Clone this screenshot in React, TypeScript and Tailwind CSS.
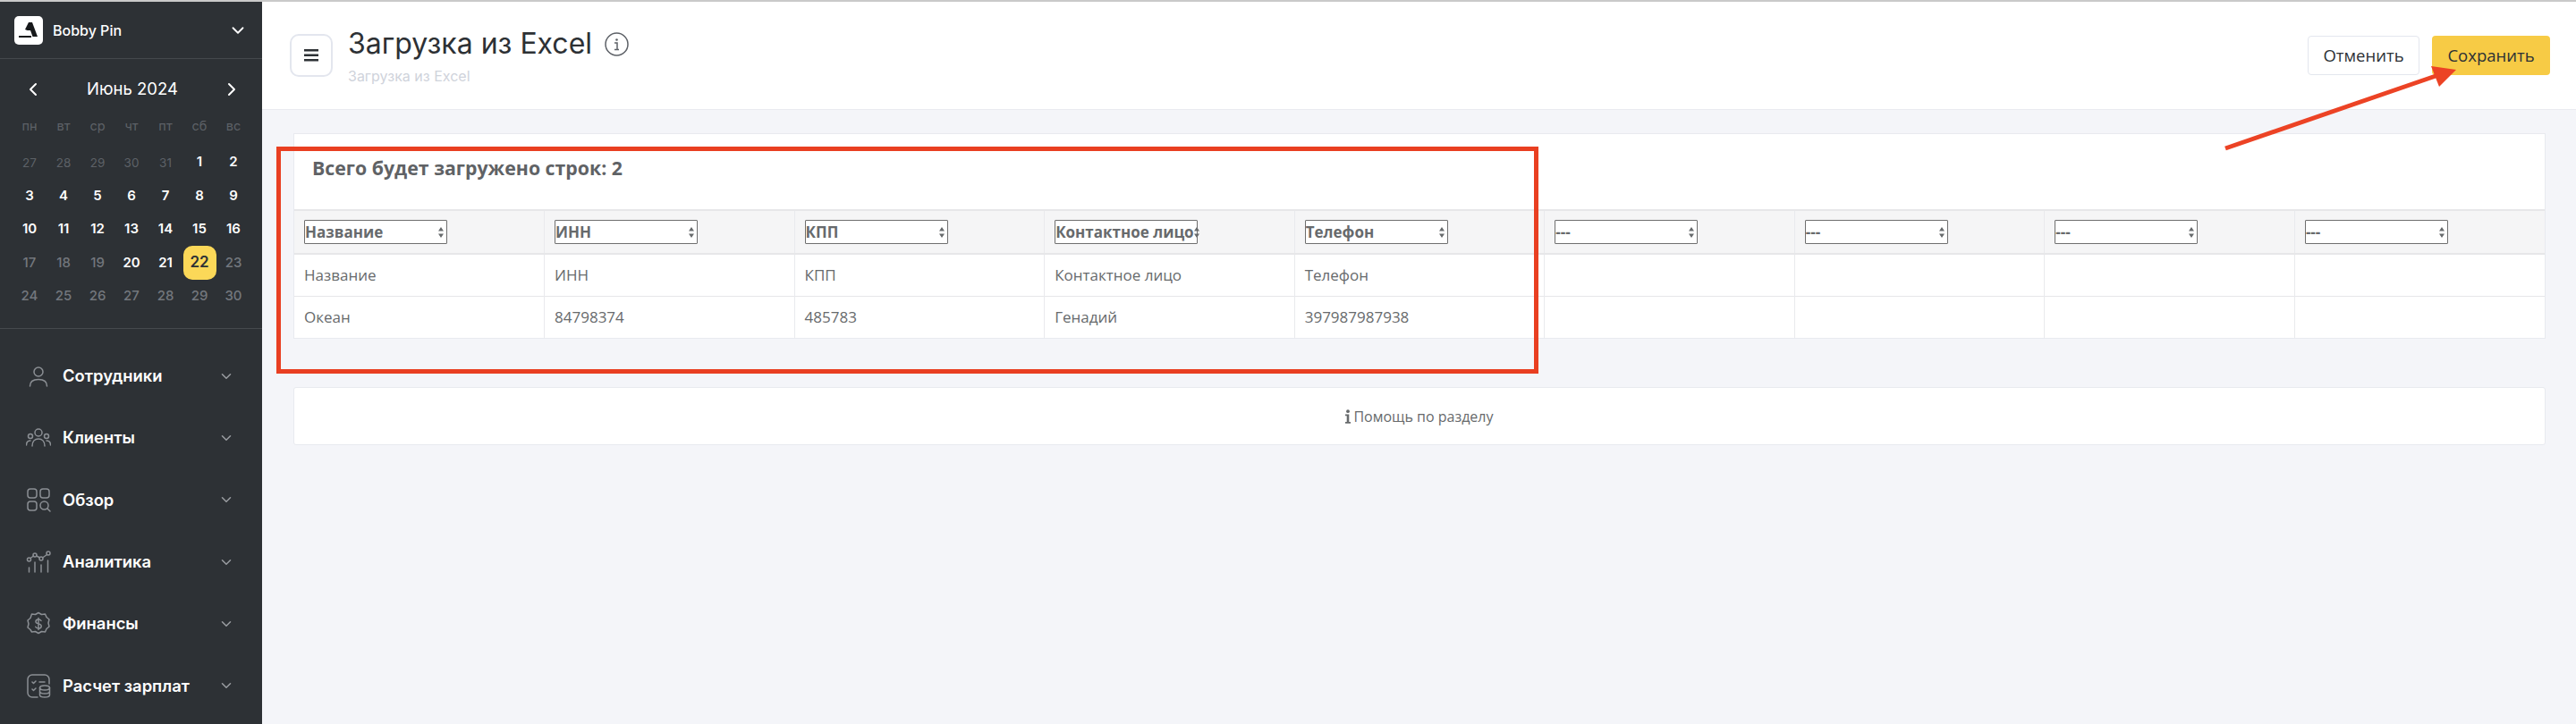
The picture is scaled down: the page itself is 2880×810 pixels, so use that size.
import { ChevronDown, ChevronLeft, ChevronRight } from 'lucide-react';
import type { ReactNode } from 'react';

const WEEK_DAYS = ['пн', 'вт', 'ср', 'чт', 'пт', 'сб', 'вс'];

// tone: m = other month, b = bright, d = dimmed, s = selected
const DAYS: [number, string][] = [
  [27, 'm'], [28, 'm'], [29, 'm'], [30, 'm'], [31, 'm'], [1, 'b'], [2, 'b'],
  [3, 'b'], [4, 'b'], [5, 'b'], [6, 'b'], [7, 'b'], [8, 'b'], [9, 'b'],
  [10, 'b'], [11, 'b'], [12, 'b'], [13, 'b'], [14, 'b'], [15, 'b'], [16, 'b'],
  [17, 'd'], [18, 'd'], [19, 'd'], [20, 'b'], [21, 'b'], [22, 's'], [23, 'd'],
  [24, 'd'], [25, 'd'], [26, 'd'], [27, 'd'], [28, 'd'], [29, 'd'], [30, 'd'],
];

const COLUMNS = ['Название', 'ИНН', 'КПП', 'Контактное лицо', 'Телефон', '---', '---', '---', '---'];
const ROWS = [
  ['Название', 'ИНН', 'КПП', 'Контактное лицо', 'Телефон', '', '', '', ''],
  ['Океан', '84798374', '485783', 'Генадий', '397987987938', '', '', '', ''],
];

function Icon({ children }: { children: ReactNode }) {
  return (
    <svg viewBox="0 0 28 28" fill="none" stroke="#8b8f94" strokeWidth="1.5" strokeLinecap="round" strokeLinejoin="round" className="w-[28px] h-[28px] shrink-0">
      {children}
    </svg>
  );
}

const MENU: { label: string; icon: ReactNode }[] = [
  {
    label: 'Сотрудники',
    icon: (
      <Icon>
        <circle cx="14" cy="9" r="5" />
        <path d="M4.500 25c0-5 4-7.500 9.500-7.500s9.500 2.500 9.500 7.500" />
      </Icon>
    ),
  },
  {
    label: 'Клиенты',
    icon: (
      <Icon>
        <circle cx="14" cy="8" r="4" />
        <circle cx="5" cy="12" r="2.500" />
        <circle cx="23" cy="12" r="2.500" />
        <path d="M7 23c0-5 3-8 7-8s7 3 7 8" />
        <path d="M0.500 22c0-3 1.500-5 4.500-5" />
        <path d="M27.500 22c0-3-1.500-5-4.500-5" />
      </Icon>
    ),
  },
  {
    label: 'Обзор',
    icon: (
      <Icon>
        <rect x="2" y="2" width="10" height="10" rx="3" />
        <rect x="16" y="2" width="10" height="10" rx="3" />
        <rect x="2" y="16" width="10" height="10" rx="3" />
        <circle cx="20.500" cy="20.500" r="4.500" />
        <path d="M24 24l3 3" />
      </Icon>
    ),
  },
  {
    label: 'Аналитика',
    icon: (
      <Icon>
        <circle cx="3.500" cy="11" r="2" />
        <circle cx="10" cy="6" r="2" />
        <circle cx="17" cy="10" r="2" />
        <circle cx="25" cy="4" r="2" />
        <path d="M5 9.500l3.500-2.500M12 7l3.500 2M18.500 9l5-3.500" />
        <path d="M3.500 20v5M10 14v11M17 17v8M24.500 12v13" />
      </Icon>
    ),
  },
  {
    label: 'Финансы',
    icon: (
      <Icon>
        <path d="M14 1.500l3.500 2 4-.5 1.500 3.500 3 2.500-1 4 1 4-3 2.500-1.500 3.500-4-.5-3.500 2-3.500-2-4 .5L5 20.500l-3-2.500 1-4-1-4 3-2.500L6.500 3l4 .5z" />
        <path d="M17 10.500c-.5-1-1.500-1.500-3-1.500-2 0-3 1-3 2.400 0 3.200 6.200 1.800 6.200 5 0 1.400-1.200 2.600-3.200 2.600-1.500 0-2.700-.6-3.200-1.700M14 7.500v13" />
      </Icon>
    ),
  },
  {
    label: 'Расчет зарплат',
    icon: (
      <Icon>
        <path d="M13 27H7a5 5 0 0 1-5-5V7a5 5 0 0 1 5-5h14a5 5 0 0 1 5 5v5" />
        <path d="M7 10l1.500 1.500L11 9M7 18l1.500 1.500L11 17M15 10h6" />
        <ellipse cx="21" cy="16.500" rx="5.500" ry="2.500" />
        <path d="M15.500 16.500v8c0 1.400 2.500 2.500 5.500 2.500s5.500-1.100 5.500-2.500v-8M15.500 20.500c0 1.400 2.500 2.500 5.500 2.500s5.500-1.100 5.500-2.500" />
      </Icon>
    ),
  },
];

function Sidebar() {
  return (
    <aside className="w-[293px] shrink-0 bg-[#2d3135] font-['Inter',sans-serif] overflow-hidden">
      <div className="h-[64px] flex items-center pl-[16px] pr-[16px] border-b border-[#45494d]">
        <div className="w-[32px] h-[32px] rounded-[5px] bg-white flex items-center justify-center">
          <svg viewBox="0 0 32 32" className="w-[32px] h-[32px]">
            <path d="M16 7h4l6 16h-5.500l-2.500-7h-3.500l-2.500-1z" fill="#17191b" />
            <path d="M5 22h14v2H5z" fill="#17191b" />
          </svg>
        </div>
        <span className="ml-[11px] text-[16px] font-medium text-white">Bobby Pin</span>
        <ChevronDown className="ml-auto w-[22px] h-[22px] text-white" strokeWidth={2} />
      </div>

      <div className="h-[302px] border-b border-[#45494d] px-[14px]">
        <div className="h-[68px] flex items-center justify-between pl-[11px] pr-[8px]">
          <ChevronLeft className="w-[24px] h-[24px] text-white" strokeWidth={2} />
          <span className="text-[18.500px] text-white">Июнь 2024</span>
          <ChevronRight className="w-[24px] h-[24px] text-white" strokeWidth={2} />
        </div>
        <div className="grid grid-cols-7 w-[266px] h-[14px] items-center">
          {WEEK_DAYS.map((d) => (
            <span key={d} className="text-center text-[14.500px] leading-[14px] text-[#5d6167]">{d}</span>
          ))}
        </div>
        <div className="grid grid-cols-7 w-[266px] auto-rows-[37.4px] mt-[15px]">
          {DAYS.map(([n, tone], i) => (
            <div key={i} className="flex items-center justify-center">
              {tone === 's' ? (
                <span className="w-[37px] h-[38px] rounded-[10px] bg-[#fbd858] flex items-center justify-center text-[17px] font-semibold text-[#2d3135]">{n}</span>
              ) : tone === 'b' ? (
                <span className="text-[15px] font-semibold text-white">{n}</span>
              ) : tone === 'd' ? (
                <span className="text-[15px] font-medium text-[#73777d]">{n}</span>
              ) : (
                <span className="text-[13.500px] text-[#5d6167]">{n}</span>
              )}
            </div>
          ))}
        </div>
      </div>

      <nav className="pt-[18px] pl-[29px] pr-[31px]">
        {MENU.map((m) => (
          <div key={m.label} className="h-[69.33px] flex items-center">
            <div className="w-[41px] flex">{m.icon}</div>
            <span className="text-[18.400px] font-semibold text-white">{m.label}</span>
            <ChevronDown className="ml-auto w-[18px] h-[18px] text-[#9a9da1]" strokeWidth={2} />
          </div>
        ))}
      </nav>
    </aside>
  );
}

function Header() {
  return (
    <header className="h-[121px] bg-white border-b border-[#e9ebf0] flex items-start pl-[31px] pr-[29px] font-['Inter',sans-serif]">
      <button className="mt-[36px] w-[48px] h-[48px] rounded-[10px] border-2 border-[#e3e6ee] flex items-center justify-center">
        <svg viewBox="0 0 16 14" className="w-[16px] h-[14px]" fill="#2d3135">
          <rect y="0" width="16" height="2.500" />
          <rect y="5.500" width="16" height="2.500" />
          <rect y="11" width="16" height="2.500" />
        </svg>
      </button>
      <div className="ml-[17px] mt-[27px]">
        <div className="flex items-center">
          <h1 className="text-[32px] leading-[40px] text-[#2d3135]">Загрузка из Excel</h1>
          <svg viewBox="0 0 27 27" className="ml-[14px] w-[27px] h-[27px]" fill="none">
            <circle cx="13.500" cy="13.500" r="12.500" stroke="#5d6167" strokeWidth="1.500" />
            <circle cx="13.500" cy="8.500" r="1.300" fill="#5d6167" />
            <path d="M11 12h3v7M11 19.500h5" stroke="#5d6167" strokeWidth="1.500" />
          </svg>
        </div>
        <p className="mt-[6px] text-[16px] leading-[20px] text-[#cfd3db]">Загрузка из Excel</p>
      </div>
      <div className="ml-auto mt-[38px] flex gap-[14px] font-['Open_Sans',sans-serif] text-[18.500px] text-[#2d3135]">
        <button className="w-[125px] h-[44px] rounded-[4px] bg-white border border-[#e3e6ee]">Отменить</button>
        <button className="w-[132px] h-[44px] rounded-[4px] bg-[#f7cb45]">Сохранить</button>
      </div>
    </header>
  );
}

function FakeSelect({ label }: { label: string }) {
  return (
    <div className="w-[160px] h-[27px] bg-white border border-[#6f6f6f] rounded-[1px] pr-[3px] flex items-center justify-between">
      <span className="text-[17px] font-bold text-[#676a6c] whitespace-nowrap">{label}</span>
      <svg viewBox="0 0 6 12" className="w-[6px] h-[12px] shrink-0" fill="#676a6c">
        <path d="M3 0l3 4.500H0zM3 12L0 7.500h6z" />
      </svg>
    </div>
  );
}

function ImportTable() {
  return (
    <div className="bg-white border border-[#e8eaef]">
      <div className="h-[84px] pt-[23px] pl-[20px] text-[21.300px] leading-[30px] font-bold text-[#5f6265]">
        Всего будет загружено строк: 2
      </div>
      <table className="w-full table-fixed border-collapse text-[17px] text-[#676a6c]">
        <thead>
          <tr className="h-[49px] bg-[#f5f5f6] border-t-2 border-b-2 border-[#e7e7e9]">
            {COLUMNS.map((c, i) => (
              <th key={i} className="pl-[11px] text-left font-normal border-l first:border-l-0 border-[#e9eaed]">
                <FakeSelect label={c} />
              </th>
            ))}
          </tr>
        </thead>
        <tbody>
          {ROWS.map((row, i) => (
            <tr key={i} className="h-[47px] border-b last:border-b-0 border-[#e7e7e9]">
              {row.map((v, j) => (
                <td key={j} className="pl-[11px] border-l first:border-l-0 border-[#e9eaed]">{v}</td>
              ))}
            </tr>
          ))}
        </tbody>
      </table>
    </div>
  );
}

export default function App() {
  return (
    <div className="relative h-[810px] w-[2880px] overflow-hidden bg-[#f4f5f9] font-['Open_Sans',sans-serif]">
      <div className="h-[2px] bg-[#c9c9c9]" />
      <div className="flex h-[808px]">
        <Sidebar />
        <main className="flex-1 min-w-0">
          <Header />
          <div className="pt-[26px] pl-[35px] pr-[34px]">
            <ImportTable />
            <div className="mt-[54px] h-[65px] bg-white border border-[#e8eaef] rounded-[3px] flex items-center justify-center text-[16px] text-[#676a6c]">
              <svg viewBox="0 0 7 18" className="w-[6px] h-[16px] mr-[3px]" fill="#676a6c">
                <circle cx="3.500" cy="2.200" r="2.200" />
                <path d="M0 6h5v10h2v2H0v-2h2V8H0z" />
              </svg>
              Помощь по разделу
            </div>
          </div>
        </main>
      </div>

      {/* annotations drawn over the screenshot */}
      <div className="absolute left-[309px] top-[164px] w-[1411px] h-[254px] border-[5px] border-[#e93f21]" />
      <svg className="absolute left-[2480px] top-[66px] w-[280px] h-[110px]" viewBox="2480 66 280 110" fill="#ec4325">
        <path d="M2488 166 L2726 84" stroke="#ec4325" strokeWidth="5" />
        <polygon points="2718,74 2746,78 2727,97" />
      </svg>
    </div>
  );
}
